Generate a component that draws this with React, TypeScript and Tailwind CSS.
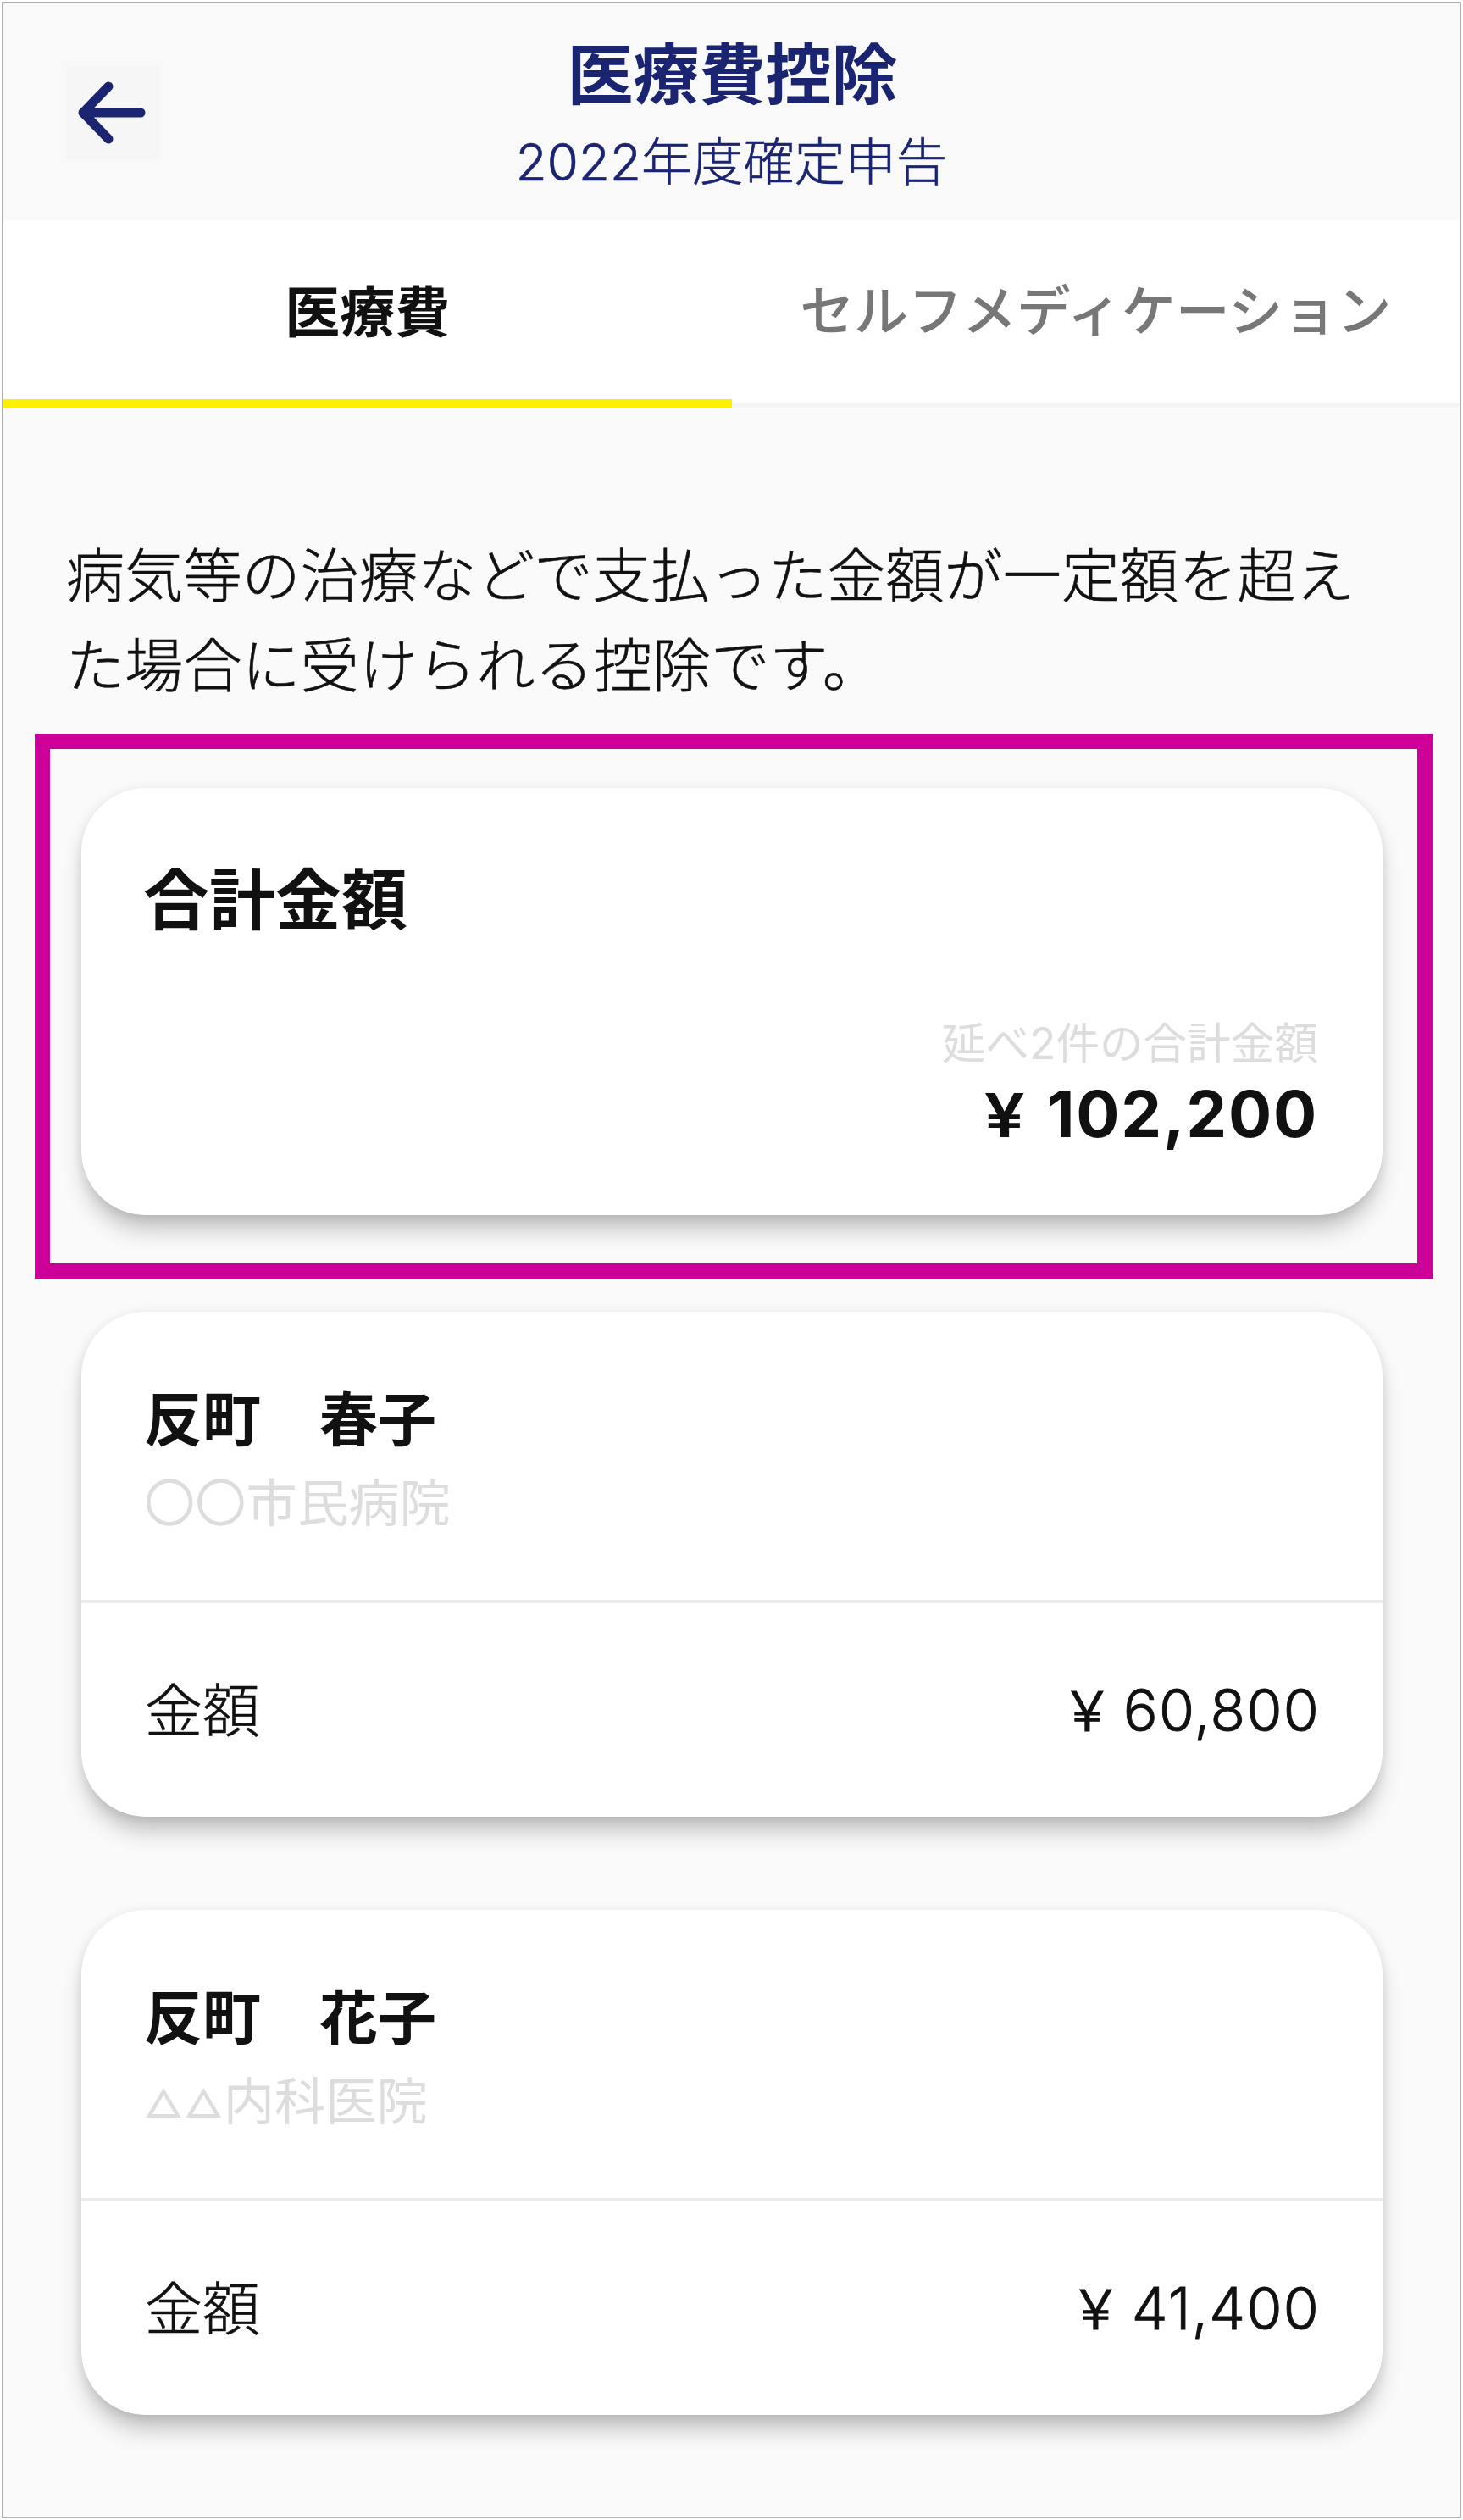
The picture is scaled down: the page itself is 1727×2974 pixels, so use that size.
import type { ReactNode } from "react";

const claims = [
  { family: "反町", given: "春子", mark: "〇〇", small: false, place: "市民病院", amount: "60,800" },
  { family: "反町", given: "花子", mark: "△△", small: true, place: "内科医院", amount: "41,400" },
];

function Card({ className, children }: { className: string; children: ReactNode }) {
  return (
    <section
      className={`w-[1536px] rounded-[76px] bg-white shadow-[0_21px_28px_-6px_rgba(0,0,0,0.25),0_2px_14px_rgba(0,0,0,0.09)] ${className}`}
    >
      {children}
    </section>
  );
}

export default function App() {
  return (
    <div className="h-[2974px] w-[1727px] bg-white pt-[2px] pl-[2px] font-['Inter','Noto_Sans_CJK_JP',sans-serif] text-[#111]" lang="ja">
      <main className="flex h-[2970px] w-[1723px] flex-col border-2 border-[#b0b0b0] bg-[#fafafa]">
        <header className="relative h-[256px] shrink-0 bg-[#f9f9f9] text-center text-[#1b2470]">
          <button aria-label="戻る" className="absolute top-[74px] left-[74px] size-[110px] bg-[#f6f6f6]">
            <svg viewBox="0 0 110 110" className="size-full" fill="none" stroke="currentColor" strokeWidth="11" strokeLinecap="round" strokeLinejoin="round">
              <path d="M50 24 20 55l30 31M20 55h68" />
            </svg>
          </button>
          <h1 className="pt-[35px] pl-[2px] text-[78px] leading-[100px] font-bold">医療費控除</h1>
          <p className="pt-[2px] text-[60px] leading-[100px] font-light tracking-[0.2px] [-webkit-text-stroke:0.6px]">2022年度確定申告</p>
        </header>
        <nav className="grid h-[221px] shrink-0 grid-cols-2 text-center text-[65px] leading-[90px] font-bold">
          <div className="border-b-[10px] border-[#fff000] bg-white pt-[64px]">医療費</div>
          <div className="h-[221px] border-b-[5px] border-[#f5f5f5] bg-white pt-[62px] font-medium text-[#777]">
            <span className="text-[64px]">セルフメディケーション</span>
          </div>
        </nav>
        <p className="mt-[146px] ml-[74px] w-[1580px] text-[69px] leading-[106px] font-light tracking-[0.2px] [-webkit-text-stroke:0.6px]">
          病気等の治療などで支払った金額が一定額を超え
          <br />
          た場合に受けられる控除です。
        </p>
        <div className="mt-[27px] ml-[37px] h-[643px] w-[1650px] shrink-0 border-[18px] border-[#c09] pt-[46px] pl-[37px]">
          <Card className="h-[504px] pt-[83px] pr-[76px] pl-[73px]">
            <h2 className="text-[78px] leading-[100px] font-bold">合計金額</h2>
            <p className="mt-[88px] text-right text-[51.6px] leading-[60px] text-[#ddd]">延べ2件の合計金額</p>
            <p className="mt-[8px] text-right text-[76px] leading-[90px] font-bold tracking-[1.8px]">
              <span className="mr-[4px] inline-block origin-right scale-x-120 text-[71px] font-semibold">¥</span> 102,200
            </p>
          </Card>
        </div>
        {claims.map((claim, i) => (
          <Card key={claim.given} className={`ml-[92px] h-[596px] shrink-0 ${i === 0 ? "mt-[39px]" : "mt-[110px]"}`}>
            <div className="h-[344px] border-b-4 border-[#ececec] px-[74px] pt-[83px]">
              <h3 className="text-[69px] leading-[90px] font-bold">{claim.family}　{claim.given}</h3>
              <p className="mt-[14px] text-[60.3px] leading-[80px] text-[#ddd]">
                <span className={claim.small ? "align-[3px] text-[45px] font-medium tracking-[0.5px]" : ""}>{claim.mark}</span>
                {claim.place}
              </p>
            </div>
            <div className="flex items-center justify-between pt-[81px] pr-[74px] pl-[75px] text-[68px] leading-[90px] font-light">
              <span className="[-webkit-text-stroke:0.6px]">金額</span>
              <span className="tracking-[1.3px] [-webkit-text-stroke:0.9px]">
                <span className="inline-block origin-right scale-x-115 text-[64px]">¥</span> {claim.amount}
              </span>
            </div>
          </Card>
        ))}
      </main>
    </div>
  );
}
